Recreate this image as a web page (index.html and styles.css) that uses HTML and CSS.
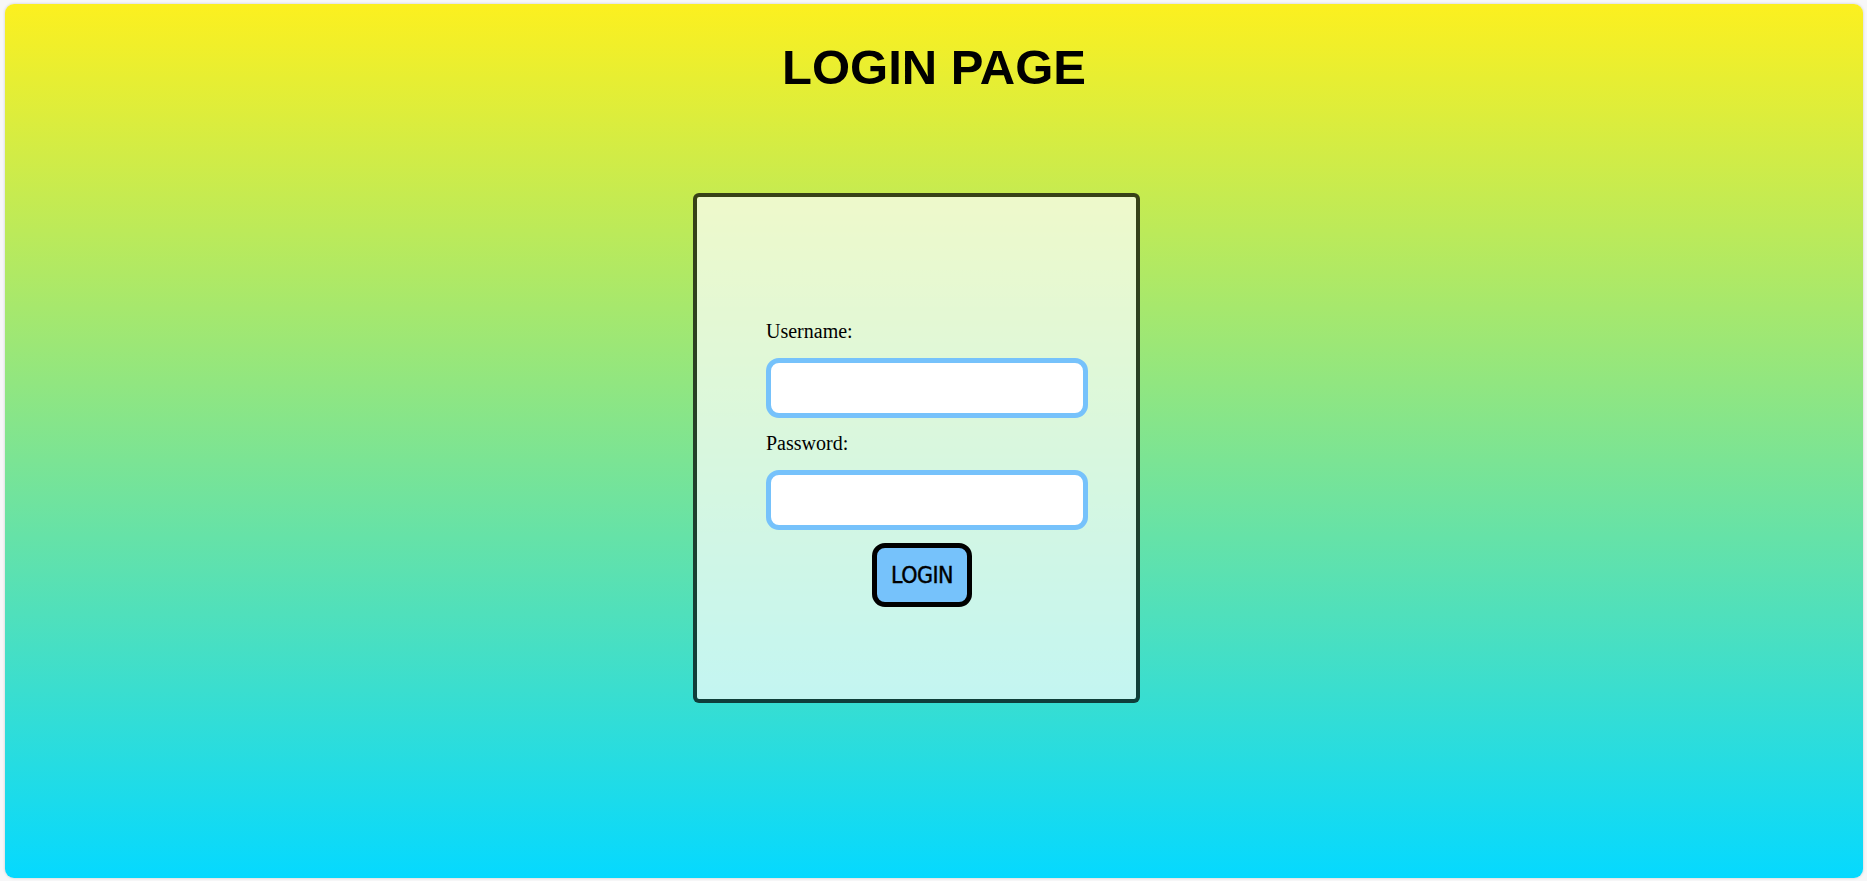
FILE: index.html
```html
<!DOCTYPE html>
<html lang="en">
<head>
<meta charset="utf-8">
<title>Login Page</title>
<link rel="stylesheet" href="styles.css">
</head>
<body>
  <main class="page">
    <h1 class="title">LOGIN PAGE</h1>
    <div class="card-row">
      <div class="card">
        <form class="login-form">
          <label class="field-label" for="username">Username:</label>
          <input class="field-input" type="text" id="username" name="username">
          <label class="field-label" for="password">Password:</label>
          <input class="field-input" type="password" id="password" name="password">
          <div class="actions">
            <button class="login-btn" type="button">LOGIN</button>
          </div>
        </form>
      </div>
    </div>
  </main>
</body>
</html>
```

FILE: styles.css
```css
html, body {
  margin: 0;
  height: 100%;
}

body {
  background: #f7f7f8;
  padding: 4px 4px 3px 5px;
  box-sizing: border-box;
  font-family: "Liberation Serif", "Times New Roman", serif;
}

.page {
  height: 874px;
  box-sizing: border-box;
  border-radius: 9px;
  box-shadow: 0 0 3px rgba(0, 0, 0, 0.18);
  background: linear-gradient(to bottom, #fcf01f 0%, #05d9ff 100%);
  padding-top: 35px;
}

.title {
  margin: 0;
  text-align: center;
  font-family: "Liberation Sans", Arial, sans-serif;
  font-weight: bold;
  font-size: 49px;
  line-height: 56px;
  color: #000;
}

.card-row {
  display: flex;
  justify-content: center;
  margin-top: 98px;
}

.card {
  width: 447px;
  height: 510px;
  box-sizing: border-box;
  margin-right: 35px;
  border: 4px solid rgba(0, 0, 0, 0.72);
  border-radius: 6px;
  background: rgba(255, 255, 255, 0.7);
  background-clip: padding-box;
  padding: 123px 58px 0 69px;
}

.login-form {
  display: flex;
  flex-direction: column;
  align-items: flex-start;
}

.field-label {
  display: block;
  font-size: 20px;
  line-height: 23px;
  color: #000;
  margin-bottom: 15px;
}

.field-input {
  display: block;
  width: 312px;
  box-sizing: content-box;
  height: 50px;
  padding: 0;
  border: 5px solid #76c2fb;
  border-radius: 13px;
  background: #fff;
  outline: none;
  margin: 0 0 14px 0;
}

.actions {
  width: 312px;
  display: flex;
  justify-content: center;
  margin-top: -1px;
}

.login-btn {
  width: 100px;
  height: 64px;
  box-sizing: border-box;
  border: 5px solid #000;
  border-radius: 13px;
  background: #76c2fb;
  color: #000;
  font-family: "DejaVu Sans Condensed", "DejaVu Sans", sans-serif;
  font-stretch: condensed;
  font-size: 23px;
  letter-spacing: -0.5px;
  -webkit-text-stroke: 0.4px #000;
  padding: 0;
  cursor: pointer;
}
```
